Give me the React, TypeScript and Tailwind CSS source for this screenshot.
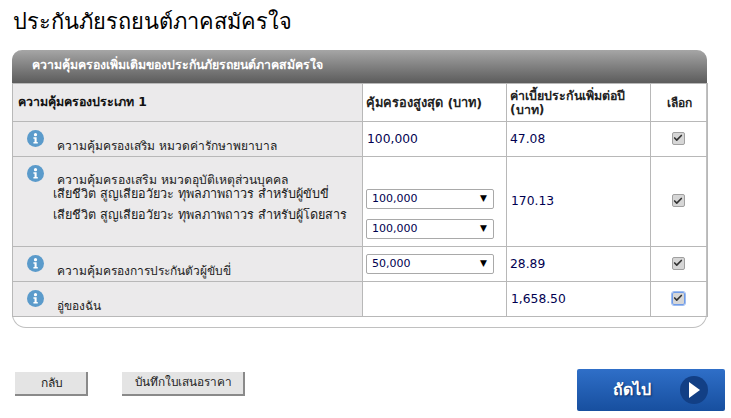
import { Check } from "lucide-react";

const font = { sans: "font-['Tahoma','DejaVu_Sans','Liberation_Sans',sans-serif]" };

function InfoIcon() {
  return (
    <svg width="17" height="17" viewBox="0 0 18 18" className="shrink-0">
      <circle cx="9" cy="9" r="9" fill="#5b9bcb" />
      <circle cx="9" cy="5" r="1.7" fill="#fff" />
      <path d="M6.8 7.6h3.4v5.2h1.2v1.6H6.8v-1.6H8V9.2H6.8z" fill="#fff" />
    </svg>
  );
}

function Tick({ focused }: { focused?: boolean }) {
  return (
    <span
      className={`inline-flex h-[13px] w-[13px] items-center justify-center rounded-[2px] border bg-[#d6d6d6] ${
        focused ? "border-[#6f9be8] outline outline-1 outline-[#9dbcf0]" : "border-[#a0a0a0]"
      }`}
    >
      <Check size={10} strokeWidth={4} className="text-[#333]" />
    </span>
  );
}

function Amount({ value }: { value: string }) {
  return (
    <div className="flex h-[20px] w-[128px] items-center justify-between rounded-[2px] border border-[#a9a9a9] bg-white pl-[5px] pr-[6px] text-[11px] text-[#000050]">
      <span>{value}</span>
      <span className="text-[9px] text-black">▼</span>
    </div>
  );
}

const cell = "border border-[#b8b8b8]";
const left = `${cell} bg-[#ebeaeb] align-top`;
const money = `${cell} text-[12.3px] text-[#000050]`;

function Label({ children }: { children: React.ReactNode }) {
  return (
    <div className="flex pl-[14px] pt-[8px]">
      <InfoIcon />
      <div className="pl-[13px] pt-[9px] text-[12px] leading-[14px] text-[#222]">{children}</div>
    </div>
  );
}

export default function App() {
  return (
    <div className={`h-[418px] w-[731px] overflow-hidden bg-white ${font.sans}`}>
      <h1 className="pl-[13px] pt-[6px] text-[21.8px] leading-[32px] text-black">ประกันภัยรถยนต์ภาคสมัครใจ</h1>
      <div className="ml-3 mt-3 h-[278px] w-[695px] rounded-b-[14px] rounded-t-[10px] border-b border-l border-r border-[#c0c0c0]">
        <div className="-mx-px flex h-[33px] items-center rounded-t-[10px] bg-gradient-to-b from-[#a6a6a6] to-[#5c5c5c] pb-[2px] pl-5 text-[12.3px] font-bold text-white">
          ความคุ้มครองเพิ่มเติมของประกันภัยรถยนต์ภาคสมัครใจ
        </div>
        <table className="-ml-px w-[695px] table-fixed border-collapse text-[12px]">
          <colgroup>
            <col className="w-[350px]" />
            <col className="w-[144px]" />
            <col className="w-[144px]" />
            <col className="w-[57px]" />
          </colgroup>
          <tbody>
            <tr className="h-[38px]">
              <td className={`${cell} bg-[#ebeaeb] pl-[5px] text-[12.4px] font-bold text-[#111]`}>ความคุ้มครองประเภท 1</td>
              <td className={`${cell} pl-[3px] text-[12.8px] font-bold text-[#222]`}>คุ้มครองสูงสุด (บาท)</td>
              <td className={`${cell} pl-[3px] text-[12.4px] font-bold leading-[14px] text-[#222]`}>ค่าเบี้ยประกันเพิ่มต่อปี (บาท)</td>
              <td className={`${cell} text-center font-bold text-[#222]`}>เลือก</td>
            </tr>
            <tr className="h-[35px]">
              <td className={left}>
                <Label>ความคุ้มครองเสริม หมวดค่ารักษาพยาบาล</Label>
              </td>
              <td className={`${money} pl-[4px]`}>100,000</td>
              <td className={`${money} pl-[3px]`}>47.08</td>
              <td className={`${cell} pr-[2px] text-center`}><Tick /></td>
            </tr>
            <tr className="h-[90px]">
              <td className={left}>
                <div className="flex pl-[14px] pt-[8px]">
                  <InfoIcon />
                  <div className="pl-[13px] pt-[8px] text-[12.6px] leading-[14px] text-[#222]">
                    <div className="text-[12.2px]">ความคุ้มครองเสริม หมวดอุบัติเหตุส่วนบุคคล</div>
                    <div className="-ml-1">เสียชีวิต สูญเสียอวัยวะ ทุพลภาพถาวร สำหรับผู้ขับขี่</div>
                    <div className="-ml-1 mt-[7px]">เสียชีวิต สูญเสียอวัยวะ ทุพลภาพถาวร สำหรับผู้โดยสาร</div>
                  </div>
                </div>
              </td>
              <td className={`${cell} pl-[3px] pt-[32px] align-top`}>
                <div className="flex flex-col gap-[10px]">
                  <Amount value="100,000" />
                  <Amount value="100,000" />
                </div>
              </td>
              <td className={`${money} pl-[4px]`}>170.13</td>
              <td className={`${cell} pr-[2px] text-center`}><Tick /></td>
            </tr>
            <tr className="h-[35px]">
              <td className={left}>
                <Label>ความคุ้มครองการประกันตัวผู้ขับขี่</Label>
              </td>
              <td className={`${cell} pl-[3px]`}><Amount value="50,000" /></td>
              <td className={`${money} pl-[3px]`}>28.89</td>
              <td className={`${cell} pr-[2px] text-center`}><Tick /></td>
            </tr>
            <tr className="h-[35px]">
              <td className={left}>
                <Label>อู่ของฉัน</Label>
              </td>
              <td className={cell}></td>
              <td className={`${money} pl-[4px]`}>1,658.50</td>
              <td className={`${cell} pr-[2px] text-center`}><Tick focused /></td>
            </tr>
          </tbody>
        </table>
      </div>
      <div className="mt-[41px] flex items-start pl-[15px] pr-[6px]">
        <button className="mt-[3px] h-[24px] w-[73px] border-b-2 border-r-2 border-[#8a8a8a] bg-[#e4e4e4] pl-[3px] text-[12px] text-[#222]">กลับ</button>
        <button className="ml-[34px] mt-[3px] h-[24px] w-[123px] border-b-2 border-r-2 border-[#8a8a8a] bg-[#e4e4e4] pl-[2px] text-[11.8px] text-[#222]">บันทึกใบเสนอราคา</button>
        <button className="ml-auto flex h-[42px] w-[148px] items-center justify-between rounded-[2px] bg-gradient-to-b from-[#2f6fc8] to-[#174f9f] pl-[36px] pr-[17px] text-[16px] font-bold text-white [text-shadow:1px_1px_2px_#0d2f66]">
          ถัดไป
          <span className="flex h-[28px] w-[28px] items-center justify-center rounded-full bg-[#123f85]">
            <svg width="11" height="16" viewBox="0 0 11 16" className="ml-[1px]"><path d="M0 0l11 8-11 8z" fill="#fff" /></svg>
          </span>
        </button>
      </div>
    </div>
  );
}
